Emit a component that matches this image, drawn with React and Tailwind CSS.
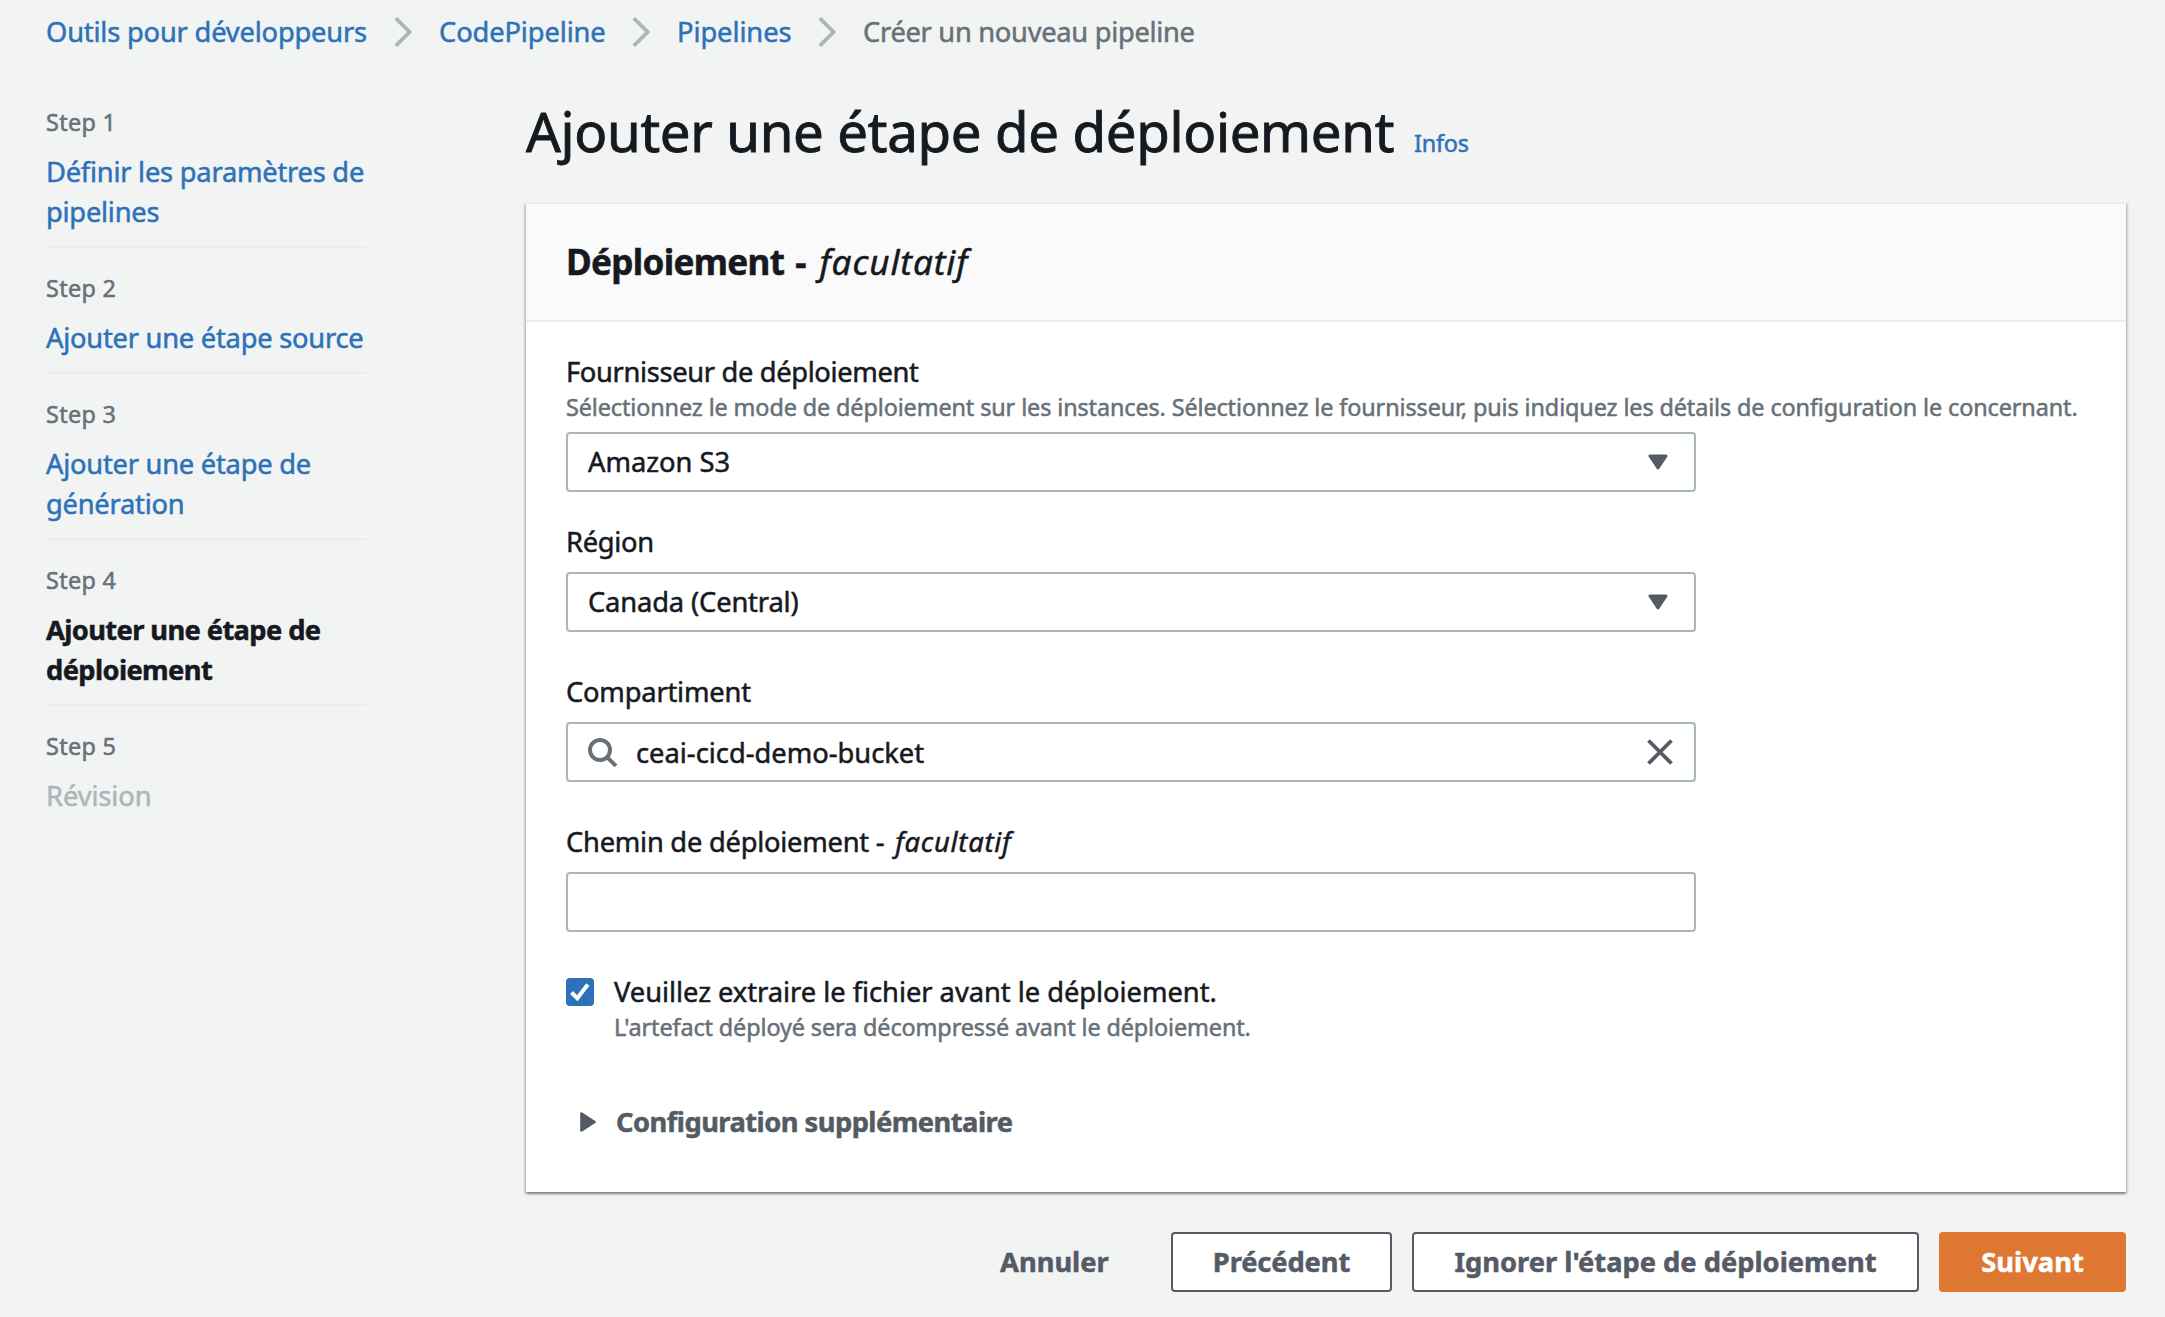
import React from 'react';

const LINK = 'text-[#2d72b8]';

function Crumb({ className = '', children }) {
  return <a className={`${LINK} whitespace-nowrap ${className}`}>{children}</a>;
}

function Chevron() {
  return (
    <svg className="h-[30px] w-[18px] shrink-0" viewBox="0 0 18 30" fill="none">
      <path d="M1.8 1.2 L15.6 15 L1.8 28.8" stroke="#aab7b8" strokeWidth="3.8" />
    </svg>
  );
}

function DownArrow() {
  return (
    <svg className="h-4 w-5" viewBox="0 0 20 16">
      <path d="M2 2 H18 L10 14 Z" fill="#545b64" stroke="#545b64" strokeWidth="3" strokeLinejoin="round" />
    </svg>
  );
}

function SearchIcon() {
  return (
    <svg className="h-[30px] w-[30px]" viewBox="0 0 30 30" fill="none" stroke="#687078" strokeWidth="4">
      <circle cx="12" cy="13" r="10" />
      <path d="M18.8 19.8 L28 29" />
    </svg>
  );
}

function CloseIcon() {
  return (
    <svg className="h-[26px] w-[26px]" viewBox="0 0 26 26" fill="none" stroke="#545b64" strokeWidth="3.8">
      <path d="M1.5 1.5 L24.5 24.5 M24.5 1.5 L1.5 24.5" />
    </svg>
  );
}

function Step({ n, title, state, last }) {
  const tone =
    state === 'current'
      ? 'font-bold text-[#16191f] tracking-[-0.62px]'
      : state === 'disabled'
        ? 'text-[#aab7b8] tracking-[-0.1px]'
        : 'text-[#2d72b8] tracking-[-0.24px]';
  return (
    <li className={last ? '' : 'mb-[25px] border-b-2 border-[#eaeded] pb-[14px]'}>
      <div className="text-[23.4px] leading-[30px] tracking-[0.3px] text-[#687078]">Step {n}</div>
      <div className={`mt-[15px] text-[27.3px] leading-[40px] ${tone}`}>
        {title.map((line) => (
          <div key={line} className="whitespace-nowrap">{line}</div>
        ))}
      </div>
    </li>
  );
}

function Label({ className = '', children }) {
  return <div className={`text-[27.3px] leading-9 whitespace-nowrap ${className}`}>{children}</div>;
}

function Box({ className = '', children }) {
  return (
    <div className={`flex h-[60px] w-[1130px] items-center rounded-[4px] border-2 border-[#aab7b8] bg-white pl-5 text-[27.3px] ${className}`}>
      {children}
    </div>
  );
}

function Button({ className = '', children }) {
  return (
    <button className={`flex h-[60px] items-center justify-center rounded-[4px] border-2 text-[27.3px] leading-9 font-bold whitespace-nowrap ${className}`}>
      {children}
    </button>
  );
}

export default function App() {
  return (
    <div className="h-[1317px] w-[2165px] overflow-hidden bg-[#f2f4f4] font-['Noto_Sans',sans-serif] text-[#16191f] [-webkit-text-stroke:0.5px]">
      <nav className="flex h-[52px] items-center gap-[27px] pt-[12px] pl-[46px] text-[27.3px] leading-[40px]">
        <Crumb className="w-[321px] tracking-[-0.19px]">Outils pour développeurs</Crumb>
        <Chevron />
        <Crumb className="w-[166px] tracking-[-0.12px]">CodePipeline</Crumb>
        <Chevron />
        <Crumb className="w-[114px] tracking-[-0.08px]">Pipelines</Crumb>
        <Chevron />
        <span className="tracking-[-0.3px] whitespace-nowrap text-[#687078]">Créer un nouveau pipeline</span>
      </nav>

      <div className="flex pl-[46px]">
        <ol className="w-80 shrink-0 pt-[55px]">
          <Step n={1} title={['Définir les paramètres de', 'pipelines']} />
          <Step n={2} title={['Ajouter une étape source']} />
          <Step n={3} title={['Ajouter une étape de', 'génération']} />
          <Step n={4} title={['Ajouter une étape de', 'déploiement']} state="current" />
          <Step n={5} title={['Révision']} state="disabled" last />
        </ol>

        <main className="ml-40 w-[1600px] pt-[45px]">
          <div className="flex items-baseline">
            <h1 className="w-[870px] text-[54.6px] leading-[68px] tracking-[-0.34px] whitespace-nowrap [-webkit-text-stroke:0.9px]">
              Ajouter une étape de déploiement
            </h1>
            <a className={`${LINK} ml-[18px] text-[23.4px] leading-[30px] tracking-[-0.2px]`}>Infos</a>
          </div>

          <section className="mt-[37px] h-[990px] border-t-2 border-[#eaeded] bg-white shadow-[0_2px_2px_0_rgba(0,28,36,0.3),2px_2px_2px_0_rgba(0,28,36,0.15),-2px_2px_2px_0_rgba(0,28,36,0.15)]">
            <header className="flex h-[118px] items-baseline border-b-2 border-[#eaeded] bg-[#fafafa] px-10 pt-[35px] text-[35.1px] leading-[44px]">
              <h2 className="font-bold tracking-[-0.68px]">Déploiement</h2>
              <span className="ml-[11px] font-bold">-</span>
              <span className="ml-[13px] tracking-[0.9px] italic">facultatif</span>
            </header>

            <div className="px-10 pt-[32px]">
              <Label className="tracking-[-0.34px]">Fournisseur de déploiement</Label>
              <p className="mt-px text-[23.4px] leading-8 tracking-[-0.11px] whitespace-nowrap text-[#687078]">
                Sélectionnez le mode de déploiement sur les instances. Sélectionnez le fournisseur, puis indiquez les détails de configuration le concernant.
              </p>
              <Box className="mt-[9px] justify-between pr-[26px]">
                <span>Amazon S3</span>
                <DownArrow />
              </Box>

              <Label className="mt-8 tracking-[-0.3px]">Région</Label>
              <Box className="mt-3 justify-between pr-[26px]">
                <span className="tracking-[-0.14px]">Canada (Central)</span>
                <DownArrow />
              </Box>

              <Label className="mt-[42px] tracking-[-0.2px]">Compartiment</Label>
              <Box className="mt-3 pr-[21px]">
                <SearchIcon />
                <span className="ml-[18px] flex-1 pt-0.5">ceai-cicd-demo-bucket</span>
                <CloseIcon />
              </Box>

              <Label className="mt-[42px] tracking-[-0.24px]">
                Chemin de déploiement - <i className="ml-[4px] tracking-[0.75px]">facultatif</i>
              </Label>
              <Box className="mt-3" />

              <div className="mt-[41px] flex gap-5">
                <span className="mt-[5px] flex h-7 w-7 items-center justify-center rounded-[4px] bg-[#2d72b8]">
                  <svg className="h-7 w-7" viewBox="0 0 28 28" fill="none" stroke="#fff" strokeWidth="4">
                    <path d="M5.5 14.5 L11.3 20.2 L21.8 6.5" />
                  </svg>
                </span>
                <div>
                  <Label className="mt-px tracking-[-0.03px]">Veuillez extraire le fichier avant le déploiement.</Label>
                  <p className="mt-px text-[23.4px] leading-8 tracking-[-0.11px] text-[#687078]">
                    L'artefact déployé sera décompressé avant le déploiement.
                  </p>
                </div>
              </div>

              <div className="mt-[61px] ml-[14px] flex items-center gap-5 text-[#545b64]">
                <svg className="h-5 w-4" viewBox="0 0 16 20">
                  <path d="M1.5 1.5 L14.5 10 L1.5 18.5 Z" fill="#545b64" stroke="#545b64" strokeWidth="2.6" strokeLinejoin="round" />
                </svg>
                <Label className="font-bold tracking-[-0.53px]">Configuration supplémentaire</Label>
              </div>
            </div>
          </section>

          <div className="mt-10 flex items-center justify-end gap-5">
            <button className="mr-[43px] w-[108px] text-[27.3px] leading-9 font-bold text-[#545b64]">Annuler</button>
            <Button className="w-[221px] border-[#545b64] bg-white tracking-[-0.13px] text-[#545b64]">Précédent</Button>
            <Button className="w-[507px] border-[#545b64] bg-white tracking-[-0.01px] text-[#545b64]">Ignorer l'étape de déploiement</Button>
            <Button className="w-[187px] border-[#dd7731] bg-[#dd7731] text-white">Suivant</Button>
          </div>
        </main>
      </div>
    </div>
  );
}
